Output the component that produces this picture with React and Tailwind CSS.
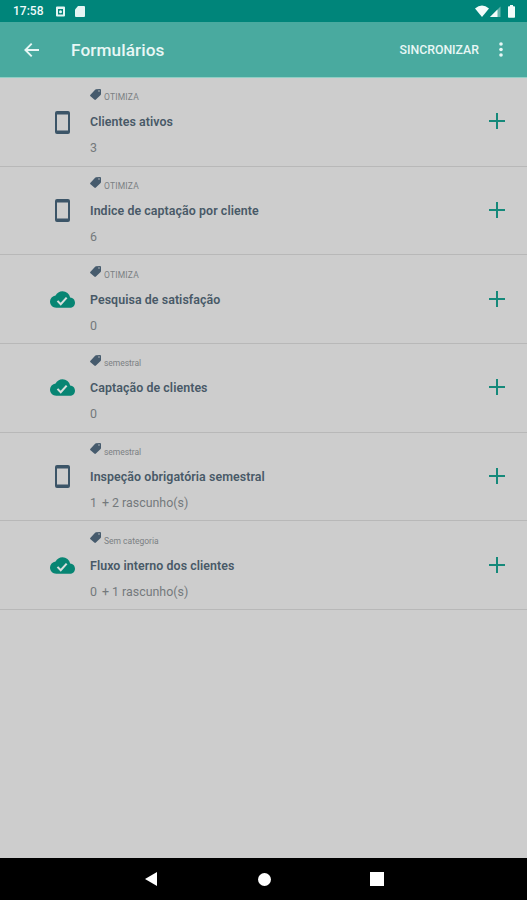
const forms = [
  { tag: "OTIMIZA", tagStyle: "tracking-[0.200px]", title: "Clientes ativos", count: "3", synced: false },
  { tag: "OTIMIZA", tagStyle: "tracking-[0.200px]", title: "Indice de captação por cliente", count: "6", synced: false },
  { tag: "OTIMIZA", tagStyle: "tracking-[0.200px]", title: "Pesquisa de satisfação", count: "0", synced: true },
  { tag: "semestral", tagStyle: "tracking-[-0.050px]", title: "Captação de clientes", count: "0", synced: true },
  { tag: "semestral", tagStyle: "tracking-[-0.050px]", title: "Inspeção obrigatória semestral", count: "1", drafts: "+ 2 rascunho(s)", synced: false },
  { tag: "Sem categoria", tagStyle: "tracking-[0px]", title: "Fluxo interno dos clientes", count: "0", drafts: "+ 1 rascunho(s)", synced: true },
];

function PhoneIcon() {
  return (
    <svg viewBox="0 0 15 23" className="h-[23px] w-[15px]" fill="#3c5568">
      <path fillRule="evenodd" d="M2 0h11a2 2 0 0 1 2 2v19a2 2 0 0 1-2 2H2a2 2 0 0 1-2-2V2a2 2 0 0 1 2-2zM2 3.500v16h11v-16z" />
    </svg>
  );
}

function CloudIcon() {
  return (
    <svg viewBox="0 0 24 24" className="h-[25px] w-[25px]" fill="#078573">
      <path d="M19.350 10.040A7.490 7.490 0 0 0 12 4C9.110 4 6.600 5.640 5.350 8.040A5.994 5.994 0 0 0 0 14c0 3.310 2.690 6 6 6h13c2.760 0 5-2.240 5-5 0-2.640-2.050-4.780-4.650-4.960z" />
      <path d="M7.200 13.300l3.100 3.200 5.700-6.300" fill="none" stroke="#d6dedc" strokeWidth="2" />
    </svg>
  );
}

function TagIcon() {
  return (
    <svg viewBox="0 0 11 11" className="mt-[0.500px] h-[11px] w-[11px] shrink-0" fill="#465b6d">
      <path fillRule="evenodd" d="M6 .3 10 0q1 0 1 1v4q0 .5-.4.900L5.900 10.500q-.8.800-1.600 0L.5 7.200q-.8-.8 0-1.500L5.100.7q.4-.4.900-.4zM9 1.300a.7.700 0 1 0 0 1.400.7.700 0 0 0 0-1.400z" />
    </svg>
  );
}

function FormRow({ form }) {
  return (
    <li className="flex h-[88.650px] border-b border-[#b8b8b8]">
      <div className="flex w-[90px] justify-center pt-[32px] pl-[34px]">
        <div className="flex h-[24px] items-center justify-center">
          {form.synced ? <CloudIcon /> : <PhoneIcon />}
        </div>
      </div>
      <div className="min-w-0 flex-1 pt-[10.300px]">
        <div className="flex h-[16px] items-start gap-[3px]">
          <TagIcon />
          <span className={"pt-[2px] text-[8.500px] leading-[14px] text-[#7b8083] " + form.tagStyle}>{form.tag}</span>
        </div>
        <h2 className="mt-[8px] h-[20px] text-[12.400px] leading-[20px] font-semibold tracking-[0.070px] text-[#485967]">{form.title}</h2>
        <p className="mt-[6px] flex h-[20px] gap-[5px] text-[12.400px] leading-[20px] tracking-[0px] text-[#74797c]">
          <span>{form.count}</span>
          {form.drafts && <span>{form.drafts}</span>}
        </p>
      </div>
      <button className="mt-[35.300px] mr-[22px] h-[16px] w-[16px]" aria-label="Adicionar">
        <svg viewBox="0 0 16 16" className="h-[16px] w-[16px]" stroke="#15897a" strokeWidth="2">
          <path d="M8 0v16M0 8h16" />
        </svg>
      </button>
    </li>
  );
}

function StatusBar() {
  return (
    <div className="flex h-[22px] items-center bg-[#00857a] pr-[11px] pl-[13px] text-[#f0fbfa]">
      <span className="w-[43px] text-[12px] leading-[22px] font-medium">17:58</span>
      <svg viewBox="0 0 30 11" className="h-[11px] w-[30px]" fill="#e4f5f3">
        <path fillRule="evenodd" d="M1 .5h7q1 0 1 1v8q0 1-1 1H1q-1 0-1-1v-8q0-1 1-1zM2 3v5.500h5V3z" />
        <circle cx="4.500" cy="5.700" r="1.500" />
        <path d="M22 0h6q1 0 1 1v9q0 1-1 1h-8q-1 0-1-1V3.500z" />
      </svg>
      <div className="flex-1" />
      <svg viewBox="0 0 41 13" className="h-[13px] w-[41px]" fill="#f3fbfa">
        <path d="M0 3.500Q7-2.300 14 3.500L7 12z" />
        <path d="M25.500 1.500V12H15z" fill="#65b5ad" />
        <path d="M22.500 4.500V12H15z" />
        <path d="M35 0h3v1.300h1.200q.8 0 .8.800V12q0 .8-.8.800h-5.400q-.8 0-.8-.8V2.100q0-.8.800-.8H35z" />
      </svg>
    </div>
  );
}

export default function App() {
  return (
    <div className="flex h-[900px] w-[527px] flex-col overflow-hidden bg-[#cdcdcd] font-[Roboto,sans-serif]">
      <StatusBar />
      <header className="flex h-[56px] items-center border-b border-[#8fcfc5] bg-[#49aa9f] text-[#e8f7f5]">
        <svg viewBox="0 0 15 14" className="ml-[24px] h-[14px] w-[15px]" fill="none" stroke="currentColor" strokeWidth="1.900">
          <path d="M7.700.7 1.400 7l6.300 6.300M1.400 7H15" />
        </svg>
        <h1 className="ml-[32px] pt-[1px] text-[17.200px] leading-[24px] font-medium tracking-[0.100px]">Formulários</h1>
        <div className="flex-1" />
        <span className="pt-[1px] text-[12.300px] font-medium">SINCRONIZAR</span>
        <svg viewBox="0 0 4 15" className="mr-[24px] ml-[20px] h-[15px] w-[4px]" fill="currentColor">
          <circle cx="2" cy="2" r="1.800" />
          <circle cx="2" cy="7.500" r="1.800" />
          <circle cx="2" cy="13" r="1.800" />
        </svg>
      </header>
      <ul className="flex-1">
        {forms.map((form) => (
          <FormRow key={form.title} form={form} />
        ))}
      </ul>
      <nav className="flex h-[42px] items-center bg-black">
        <svg viewBox="0 0 12 14" className="ml-[145px] h-[14px] w-[12px]" fill="#fff">
          <path d="M12 0v14L0 7z" />
        </svg>
        <span className="ml-[101px] h-[13px] w-[13px] rounded-full bg-white" />
        <span className="ml-[99px] h-[14px] w-[14px] bg-white" />
      </nav>
    </div>
  );
}
